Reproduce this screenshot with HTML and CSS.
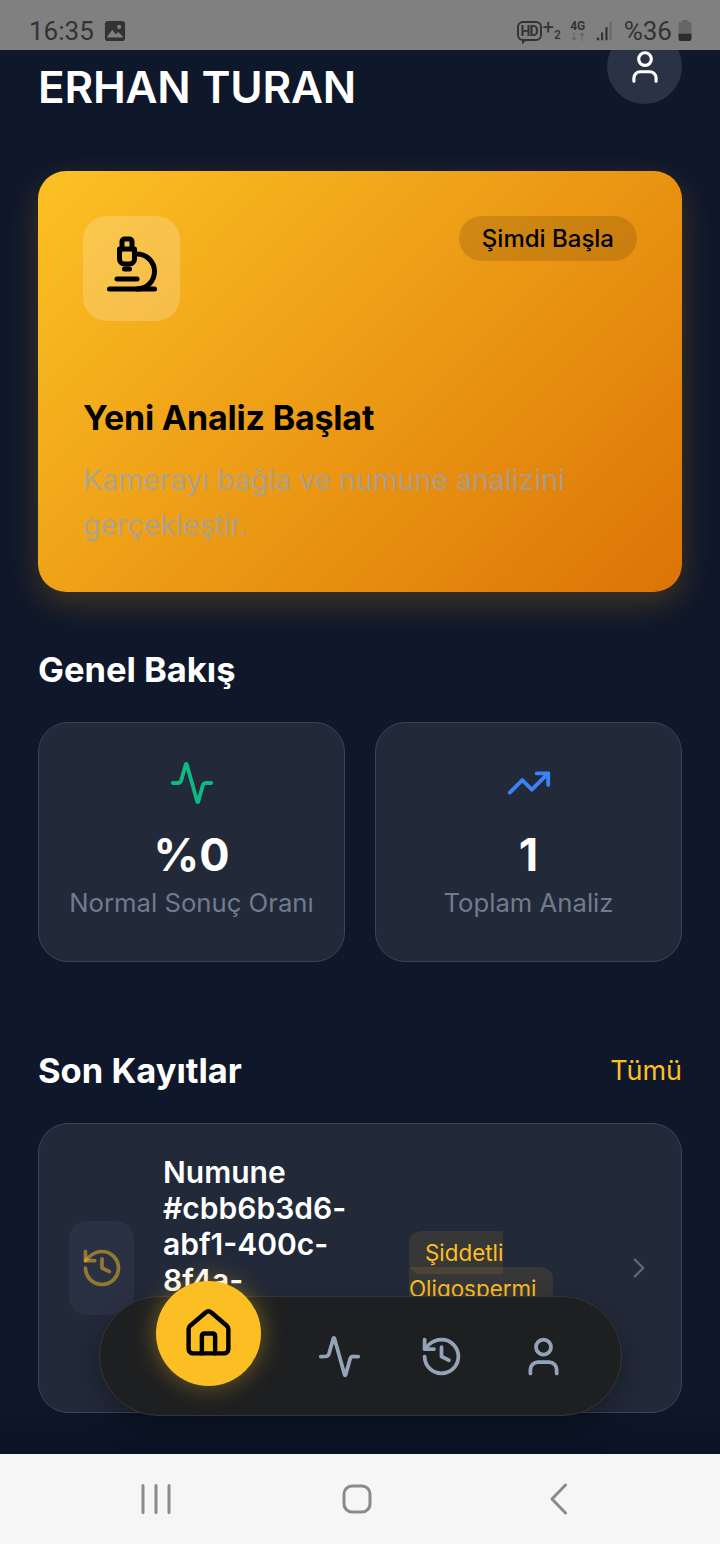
FILE: index.html
```html
<!DOCTYPE html>
<html lang="tr">
<head>
  <meta charset="UTF-8" />
  <meta name="viewport" content="width=device-width, initial-scale=1.0" />
  <title>Erhan Turan | Ana Sayfa</title>
  <link rel="stylesheet" href="styles.css">
</head>
<body>

  <div class="phone">

    <div class="status-bar">
      <div class="status-left">
        <span class="clock">16:35</span>
        <svg class="status-pic" viewBox="0 0 24 24"><rect x="1" y="1" width="22" height="22" rx="3.5" fill="#333"/><circle cx="16.5" cy="7.5" r="2.2" fill="#808080"/><path d="M3.5 18l5.5-7 4 4.5 2.5-2.5 5 5v1H3.5z" fill="#808080"/></svg>
      </div>
      <div class="status-right">
        <span class="hd">HD</span>
        <span class="plus">+<sub>2</sub></span>
        <span class="net">4G
          <svg viewBox="0 0 18 9"><path d="M5 0v8M2.5 5.5 5 8l2.5-2.5M13 9V1M10.5 3.500 13 1l2.500 2.500" fill="none" stroke="#666" stroke-width="1.200"/></svg>
        </span>
        <svg class="signal" viewBox="0 0 18 24"><rect x="0" y="19" width="3" height="3" fill="#333"/><rect x="5" y="13" width="2.500" height="9" fill="#333"/><rect x="10" y="7" width="2.500" height="15" fill="#333"/><rect x="15" y="1" width="2" height="21" fill="#666"/></svg>
        <span class="battery-text">%36</span>
        <svg class="battery" viewBox="0 0 14 24"><rect x="4" y="0" width="6" height="2.500" fill="#666"/><rect x="0" y="2" width="14" height="21" rx="2.500" fill="#666"/><path d="M0 15h14v5.500a2.500 2.500 0 0 1-2.500 2.500h-9A2.500 2.500 0 0 1 0 20.500z" fill="#2c2c2c"/></svg>
      </div>
    </div>

    <main class="screen">

      <header class="top">
        <div class="greeting">
          <p>Hoş geldiniz,</p>
          <h1>ERHAN TURAN</h1>
        </div>
        <div class="avatar">
          <svg class="icon icon-avatar" viewBox="0 0 24 24"><path d="M19 21v-2a4 4 0 0 0-4-4H9a4 4 0 0 0-4 4v2"/><circle cx="12" cy="7" r="4"/></svg>
        </div>
      </header>

      <section class="hero">
        <div class="hero-top">
          <div class="hero-icon">
            <svg class="icon icon-hero" viewBox="0 0 24 24"><path d="M6 18h8"/><path d="M3 22h18"/><path d="M14 22a7 7 0 1 0 0-14h-1"/><path d="M9 14h2"/><path d="M9 12a2 2 0 0 1-2-2V6h6v4a2 2 0 0 1-2 2Z"/><path d="M12 6V3a1 1 0 0 0-1-1H9a1 1 0 0 0-1 1v3"/></svg>
          </div>
          <span class="hero-badge">Şimdi Başla</span>
        </div>
        <h2>Yeni Analiz Başlat</h2>
        <p>Kamerayı bağla ve numune analizini gerçekleştir.</p>
      </section>

      <h3 class="section-title">Genel Bakış</h3>
      <section class="stats">
        <div class="stat-card">
          <svg class="icon icon-stat green" viewBox="0 0 24 24"><path d="M22 12h-2.480a2 2 0 0 0-1.930 1.460l-2.350 8.360a.25.25 0 0 1-.48 0L9.240 2.180a.25.25 0 0 0-.48 0l-2.350 8.360A2 2 0 0 1 4.490 12H2"/></svg>
          <div class="stat-value">%0</div>
          <div class="stat-label">Normal Sonuç Oranı</div>
        </div>
        <div class="stat-card">
          <svg class="icon icon-stat blue" viewBox="0 0 24 24"><path d="M22 7 13.500 15.500 8.500 10.500 2 17"/><path d="M16 7h6v6"/></svg>
          <div class="stat-value">1</div>
          <div class="stat-label">Toplam Analiz</div>
        </div>
      </section>

      <div class="section-row">
        <h3 class="section-title">Son Kayıtlar</h3>
        <a class="see-all" href="#">Tümü</a>
      </div>

      <section class="record">
        <div class="record-icon">
          <svg class="icon icon-record" viewBox="0 0 24 24"><path d="M3 12a9 9 0 1 0 9-9 9.750 9.750 0 0 0-6.740 2.740L3 8"/><path d="M3 3v5h5"/><path d="M12 7v5l4 2"/></svg>
        </div>
        <div class="record-title">Numune #cbb6b3d6-abf1-400c-8f4a-</div>
        <div class="record-status"><span>Şiddetli Oligospermi</span></div>
        <svg class="icon icon-chevron" viewBox="0 0 24 24"><path d="m9 18 6-6-6-6"/></svg>
      </section>

      <nav class="tabbar">
        <a class="tab-home" href="#">
          <svg class="icon icon-home" viewBox="0 0 24 24"><path d="M15 21v-8a1 1 0 0 0-1-1h-4a1 1 0 0 0-1 1v8"/><path d="M3 10a2 2 0 0 1 .709-1.528l7-5.999a2 2 0 0 1 2.582 0l7 5.999A2 2 0 0 1 21 10v9a2 2 0 0 1-2 2H5a2 2 0 0 1-2-2z"/></svg>
        </a>
        <a class="tab" href="#">
          <svg class="icon icon-tab" viewBox="0 0 24 24"><path d="M22 12h-2.480a2 2 0 0 0-1.930 1.460l-2.350 8.360a.25.25 0 0 1-.48 0L9.240 2.180a.25.25 0 0 0-.48 0l-2.350 8.360A2 2 0 0 1 4.490 12H2"/></svg>
        </a>
        <a class="tab" href="#">
          <svg class="icon icon-tab" viewBox="0 0 24 24"><path d="M3 12a9 9 0 1 0 9-9 9.750 9.750 0 0 0-6.740 2.740L3 8"/><path d="M3 3v5h5"/><path d="M12 7v5l4 2"/></svg>
        </a>
        <a class="tab" href="#">
          <svg class="icon icon-tab" viewBox="0 0 24 24"><path d="M19 21v-2a4 4 0 0 0-4-4H9a4 4 0 0 0-4 4v2"/><circle cx="12" cy="7" r="4"/></svg>
        </a>
      </nav>
    </main>

    <div class="system-nav">
      <svg class="sys-recents" viewBox="0 0 30 30"><path d="M2 1.500v27M15 1.500v27M28 1.500v27"/></svg>
      <svg class="sys-home" viewBox="0 0 30 30"><rect x="2" y="2" width="26" height="26" rx="8"/></svg>
      <svg class="sys-back" viewBox="0 0 20 32"><path d="M16.500 2 3 16l13.500 14"/></svg>
    </div>

  </div>

</body>
</html>
```

FILE: styles.css
```css
:root {
  --bg-main: #0f172a;
  --card-bg: #222939;
  --card-border: #3c4356;
  --amber: #fbbf24;
  --text-main: #ffffff;
  --text-muted: #727b8d;
  --nav-icon: #94a3b8;
}

* {
  margin: 0;
  padding: 0;
  box-sizing: border-box;
  font-family: 'Inter', sans-serif;
}

body {
  background: var(--bg-main);
  color: var(--text-main);
}

.phone {
  width: 720px;
  height: 1544px;
  display: flex;
  flex-direction: column;
  overflow: hidden;
}

/* Status bar */
.status-bar {
  height: 50px;
  flex-shrink: 0;
  position: relative;
  z-index: 5;
  background: #808080;
  color: #333333;
  padding: 14px 28px 0 29px;
  display: flex;
  justify-content: space-between;
  align-items: flex-start;
  font-family: 'Roboto', sans-serif;
}

.status-bar span,
.status-bar sub {
  font-family: 'Roboto', sans-serif;
}

.status-left,
.status-right {
  display: flex;
  align-items: center;
  height: 34px;
}

.clock {
  font-size: 26px;
}

.status-pic {
  width: 22px;
  height: 22px;
  margin-left: 10px;
}

.hd {
  position: relative;
  font-size: 14px;
  font-weight: 700;
  line-height: 16px;
  border: 2px solid #333333;
  border-radius: 6px;
  padding: 0 2px;
  letter-spacing: -1px;
}

.hd::after {
  content: "";
  position: absolute;
  left: 3px;
  bottom: -6px;
  width: 5px;
  height: 5px;
  background: #333333;
  clip-path: polygon(0 0, 100% 0, 0 100%);
}

.plus {
  font-size: 20px;
  margin-left: 1px;
  line-height: 24px;
}

.plus sub {
  font-size: 12px;
  font-weight: 500;
}

.net {
  display: flex;
  flex-direction: column;
  align-items: center;
  font-size: 12px;
  font-weight: 700;
  line-height: 11px;
  margin-left: 8px;
}

.net svg {
  width: 18px;
  height: 9px;
}

.signal {
  width: 17px;
  height: 21px;
  margin-left: 9px;
}

.battery-text {
  font-size: 26px;
  margin-left: 11px;
}

.battery {
  width: 14px;
  height: 22px;
  margin-left: 6px;
}

/* Shared icon look */
.icon {
  fill: none;
  stroke: currentColor;
  stroke-width: 2;
  stroke-linecap: round;
  stroke-linejoin: round;
}

/* Main screen */
.screen {
  flex: 1;
  position: relative;
  overflow: hidden;
  padding: 0 38px;
  background: linear-gradient(to bottom, var(--bg-main) 96%, #0a1224);
}

/* Header */
.top {
  margin-top: -22px;
  height: 76px;
  display: flex;
  justify-content: space-between;
  align-items: flex-start;
}

.greeting p {
  font-size: 24px;
  line-height: 28px;
  color: #94a3b8;
  margin-top: -5px;
}

.greeting h1 {
  font-size: 44px;
  font-weight: 600;
  line-height: 53px;
  letter-spacing: -0.2px;
  margin-top: 10px;
}

.avatar {
  width: 75px;
  height: 75px;
  margin-top: 1px;
  border-radius: 50%;
  background: #2a3245;
  display: flex;
  align-items: center;
  justify-content: center;
}

.icon-avatar {
  width: 38px;
  height: 38px;
  color: #ffffff;
}

/* Hero card */
.hero {
  margin-top: 67px;
  padding: 45px;
  height: 421px;
  border-radius: 28px;
  background: linear-gradient(135deg, #fcc124, #dc7406);
  box-shadow: 0 12px 32px rgba(245, 158, 11, 0.22);
}

.hero-top {
  display: flex;
  justify-content: space-between;
  align-items: flex-start;
}

.hero-icon {
  padding: 18px 18.5px 27px;
  border-radius: 24px;
  background: rgba(255, 255, 255, 0.2);
  color: #000000;
}

.icon-hero {
  display: block;
  width: 60px;
  height: 60px;
}

.hero-badge {
  height: 45px;
  padding: 0 23px;
  border-radius: 23px;
  background: rgba(0, 0, 0, 0.13);
  color: #000000;
  font-size: 24px;
  font-weight: 500;
  line-height: 45px;
}

.hero h2 {
  margin-top: 71px;
  font-size: 34px;
  font-weight: 700;
  line-height: 51px;
  letter-spacing: -0.2px;
  color: #000000;
}

.hero p {
  margin-top: 14px;
  font-size: 28.5px;
  line-height: 45px;
  color: rgba(148, 163, 184, 0.72);
}

/* Sections */
.section-title {
  font-size: 34.5px;
  font-weight: 700;
  line-height: 51px;
}

.hero + .section-title {
  margin-top: 52px;
}

.stats {
  margin-top: 27px;
  display: grid;
  grid-template-columns: 1fr 1fr;
  gap: 30px;
}

.stat-card {
  height: 240px;
  padding-top: 37px;
  border-radius: 30px;
  background: var(--card-bg);
  border: 1.5px solid var(--card-border);
  display: flex;
  flex-direction: column;
  align-items: center;
}

.icon-stat {
  width: 46px;
  height: 46px;
}

.green { color: #10b981; }
.blue { color: #3b82f6; }

.stat-value {
  margin-top: 20px;
  font-size: 45px;
  font-weight: 700;
  line-height: 58px;
}

.stat-label {
  margin-top: 1px;
  font-size: 25.7px;
  line-height: 36px;
  color: var(--text-muted);
}

.section-row {
  margin-top: 83px;
  display: flex;
  justify-content: space-between;
  align-items: center;
}

.see-all {
  color: var(--amber);
  font-size: 27px;
  text-decoration: none;
}

/* Record card */
.record {
  margin-top: 27px;
  height: 290px;
  padding: 0 30px;
  border-radius: 30px;
  background: var(--card-bg);
  border: 1.5px solid var(--card-border);
  display: flex;
  align-items: center;
}

.record-icon {
  width: 65px;
  height: 94px;
  flex-shrink: 0;
  border-radius: 18px;
  background: #2a3143;
  color: rgba(251, 191, 36, 0.5);
  display: flex;
  align-items: center;
  justify-content: center;
}

.icon-record {
  width: 44px;
  height: 44px;
}

.record-title {
  width: 210px;
  margin-left: 29px;
  align-self: flex-start;
  margin-top: 30px;
  font-size: 30px;
  font-weight: 600;
  line-height: 36px;
}

.record-status {
  width: 170px;
  margin-left: 36px;
  font-size: 22.4px;
  line-height: 36px;
  color: var(--amber);
  align-self: flex-start;
  margin-top: 111px;
}

.record-status span {
  padding: 8px 16px;
  background: rgba(251, 191, 36, 0.1);
  border-radius: 12px;
}

.icon-chevron {
  width: 34px;
  height: 34px;
  stroke-width: 1.6;
  margin-left: auto;
  margin-right: -4.5px;
  color: #5d6a80;
}

/* Floating tab bar */
.tabbar {
  position: absolute;
  left: 99px;
  top: 1246px;
  width: 523px;
  height: 120px;
  padding-left: 56px;
  border-radius: 60px;
  background: #1e1f21;
  border: 1.5px solid #343538;
  box-shadow: 0 10px 30px rgba(0, 0, 0, 0.3);
  display: flex;
  align-items: center;
}

.tab-home {
  width: 105px;
  height: 105px;
  border-radius: 50%;
  margin-top: -46px;
  background: var(--amber);
  color: #000000;
  box-shadow: 0 0 24px rgba(251, 191, 36, 0.4);
  display: flex;
  align-items: center;
  justify-content: center;
}

.icon-home {
  width: 53px;
  height: 53px;
}

.tab {
  color: var(--nav-icon);
  display: flex;
  margin-left: 57px;
}

.tab-home + .tab {
  margin-left: 56px;
}

.icon-tab {
  width: 45px;
  height: 45px;
}

/* Android nav */
.system-nav {
  height: 90px;
  flex-shrink: 0;
  background: #f6f6f6;
  position: relative;
  z-index: 5;
  display: flex;
  align-items: center;
}

.system-nav svg {
  fill: none;
  stroke: #8a8a8a;
  stroke-width: 3;
  stroke-linecap: round;
  stroke-linejoin: round;
}

.sys-recents {
  width: 30px;
  height: 30px;
  margin-left: 141px;
}

.sys-home {
  width: 30px;
  height: 30px;
  margin-left: 171px;
}

.sys-back {
  width: 20px;
  height: 32px;
  margin-left: 177px;
}
```
